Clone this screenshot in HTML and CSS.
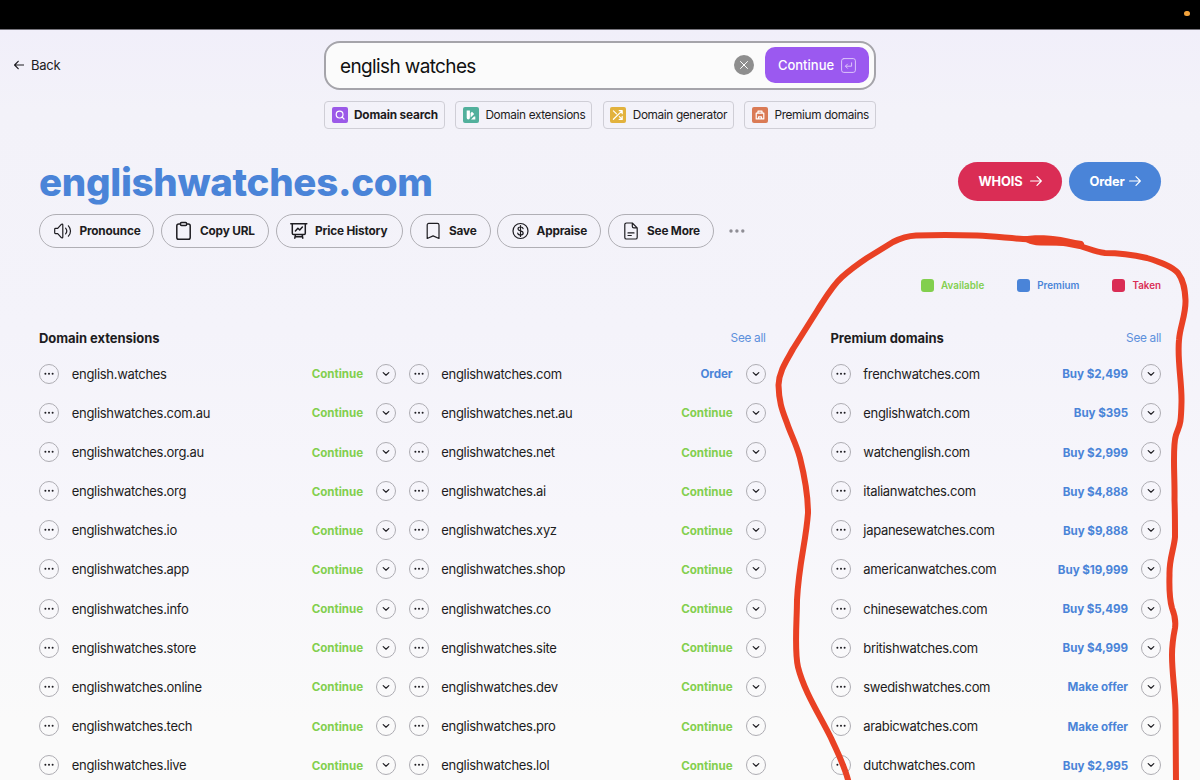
FILE: index.html
```html
<!DOCTYPE html>
<html lang="en">
<head>
	<meta charset="UTF-8">
	<title>englishwatches.com</title>
	<link rel="stylesheet" href="styles.css">
</head>
<body>
<div class="topbar"><i class="cam-dot"></i></div>

<header class="header">
	<a class="back">
		<svg width="10" height="10" viewBox="0 0 10 10"><path d="M9.7 5H.8M4.2 1.3L.6 5l3.6 3.7"/></svg>
		Back
	</a>
	<div class="search">
		<div class="search-box">
			<span class="search-text">english watches</span>
			<span class="clear"><svg width="20" height="20" viewBox="0 0 20 20"><path d="M6.5 6.5l7 7M13.5 6.5l-7 7"/></svg></span>
			<button class="go">Continue
				<svg width="15" height="15" viewBox="0 0 15 15"><rect x=".6" y=".6" width="13.8" height="13.8" rx="2.2"/><path d="M10.6 4.8v3.4H4.6M6.5 6.1L4.4 8.2l2.1 2.1"/></svg>
			</button>
		</div>
		<nav class="tabs">
			<a class="tab on"><span class="tab-icon purple"><svg width="16" height="16" viewBox="0 0 16 16"><circle cx="7.6" cy="7.6" r="3.4"/><path d="M10.2 10.2l1.8 1.8"/></svg></span>Domain search</a>
			<a class="tab"><span class="tab-icon teal"><svg width="16" height="16" viewBox="0 0 16 16"><path class="fill" d="M3.7 3.6h3.2v7.2a1.6 1.6 0 0 1-3.2 0zM7.6 6.1l1.4-1.4 2.2 2.2-3.600 3.600zM8 12.400l3-3h1.300v3z"/></svg></span>Domain extensions</a>
			<a class="tab"><span class="tab-icon yellow"><svg width="16" height="16" viewBox="0 0 16 16"><path d="M3.4 12.3L12 3.9M9.2 3.7h3v3M3.4 3.9l3.1 3M9.3 9.6l2.9 2.7M12.2 9.4v3h-3"/></svg></span>Domain generator</a>
			<a class="tab"><span class="tab-icon orange"><svg width="16" height="16" viewBox="0 0 16 16"><path d="M4.2 6.2h7.6v5.700H4.200zM6 6V4.200h4V6M6.500 11.700v-1.800h3v1.800"/></svg></span>Premium domains</a>
		</nav>
	</div>
</header>

<main class="main">
	<div class="title-row">
		<h1>englishwatches.com</h1>
		<div class="cta">
			<button class="pill red">WHOIS <svg width="12" height="12" viewBox="0 0 12 12"><path d="M.6 6h10.6M7 1.6L11.3 6 7 10.4"/></svg></button>
			<button class="pill blue">Order <svg width="12" height="12" viewBox="0 0 12 12"><path d="M.6 6h10.6M7 1.6L11.3 6 7 10.4"/></svg></button>
		</div>
	</div>

	<div class="tools">
		<button class="tool t1"><svg width="19" height="18" viewBox="0 0 19 18"><path d="M1.5 6.4h2.2l3.6-4c.7-.6 1.500-.3 1.500.6v12c0 .9-.8 1.200-1.500.6l-3.600-4H1.500c-.5 0-.8-.3-.8-.8V7.200c0-.5.3-.8.8-.8zM11.600 6.100c1.400 1.700 1.400 4.100 0 5.800M14.400 3.800c2.800 2.900 2.800 7.500 0 10.400"/></svg>Pronounce</button>
		<button class="tool t2"><svg width="18" height="20" viewBox="0 0 18 20"><path class="bold" d="M5.600 3H3.800C2.600 3 1.800 3.800 1.800 4.800v11.600c0 1 .8 1.800 1.800 1.800h9.800c1 0 1.800-.8 1.800-1.800V4.800c0-1-.8-1.800-1.800-1.800h-1.800M6.500 1.600h4.100c.6 0 1 .4 1 1v.8c0 .6-.4 1-1 1H6.500c-.6 0-1-.4-1-1v-.8c0-.6.4-1 1-1z"/></svg>Copy URL</button>
		<button class="tool t3"><svg width="18" height="18" viewBox="0 0 18 18"><path class="bold" d="M.8 1.700h16M2.300 1.700v9.600c0 .8.5 1.300 1.300 1.300h10.400c.8 0 1.300-.5 1.300-1.300V1.700M5.400 9l2.500-2.700 1.800 1.700L12.400 5M5.500 12.700l-.7 3.500M12.100 12.700l.7 3.500M5.200 14.700h7.200"/></svg>Price History</button>
		<button class="tool t4"><svg width="16" height="18" viewBox="0 0 16 18"><path d="M2.200 16.500V3c0-1 .7-1.600 1.600-1.600h8.600c1 0 1.600.7 1.600 1.600v13.500l-5.900-2.600z"/></svg>Save</button>
		<button class="tool t5"><svg width="18" height="18" viewBox="0 0 18 18"><circle cx="8.500" cy="9" r="7.500"/><path d="M11.100 6.700c-.2-1.100-1.200-1.700-2.600-1.700S6 5.700 6 6.900c0 2.700 5.200 1.400 5.200 4.100 0 1.300-1.100 2-2.700 2s-2.600-.7-2.800-1.900M8.500 3.600v10.800"/></svg>Appraise</button>
		<button class="tool t6"><svg width="16" height="18" viewBox="0 0 16 18"><path d="M9.300 1H3.400c-.9 0-1.600.7-1.600 1.600v12.800c0 .9.7 1.600 1.600 1.600h9.200c.9 0 1.600-.7 1.600-1.600V5.900zM9.300 1v3.300c0 .9.7 1.600 1.600 1.600h3.300M5 10.900h6M5 13.500h3.300"/></svg>See More</button>
		<svg class="more" width="16" height="4" viewBox="0 0 16 4"><circle cx="2" cy="2" r="1.700"/><circle cx="7.900" cy="2" r="1.700"/><circle cx="13.800" cy="2" r="1.700"/></svg>
	</div>

	<div class="legend">
		<span class="available"><i></i>Available</span>
		<span class="premium"><i></i>Premium</span>
		<span class="taken"><i></i>Taken</span>
	</div>

	<div class="lists">
		<section>
			<div class="list-head"><h2>Domain extensions</h2><a>See all</a></div>
			<div class="cols">
				<ul id="extA"></ul>
				<ul id="extB"></ul>
			</div>
		</section>
		<section>
			<div class="list-head"><h2>Premium domains</h2><a>See all</a></div>
			<ul id="premium"></ul>
		</section>
	</div>
</main>

<!-- hand drawn marker round the premium list -->
<svg class="marker" width="1200" height="780" viewBox="0 0 1200 780">
	<path class="stroke" d="M849 784C846 769 840 758 831 738C819 714 804 691 798 667C794 650 797 620 797 600C799 562 806 542 808 513C808 493 805 478 800 458C796 443 791 435 787 423C783 412 779 404 778.500 385C779 371 787 360 793 349L817 311C826 297 832 286 842 277C851 269 858 264 867 258L893 242C901 238 907 236 916 235.500C930 235 960 235 977 235.500C995 236.500 1008 238 1023 239C1045 240 1062 242 1080 246C1090 249 1096 252 1105 253C1122 253 1138 256 1147 258C1160 262 1172 266 1178 273C1184 281 1185 290 1185.500 300C1186 315 1180 326 1179 340C1177 360 1182 382 1181.500 402C1181 425 1180 424 1176 435C1172 447 1175 475 1174.500 500C1175 512 1175 526 1175 537C1174 549 1169 559 1169.500 575C1169 592 1170 601 1172 608C1174 613 1176 621 1175 628C1173 638 1172 643 1172 655C1172 674 1175 690 1175.500 710L1176 784"/>
	<path class="blob" d="M1020 237C1030 235 1045 235 1053 236C1064 237 1073 240 1082 241Q1085 243 1084 246L1040 245.500C1029 245 1023 241 1020 237z"/>
</svg>

<script src="script.js"></script>
</body>
</html>
```
FILE: styles.css
```css
* {
	box-sizing: border-box;
}

html, body {
	height: 780px;
	overflow: hidden;
}

body {
	margin: 0;
	position: relative;
	font-family: Inter, "Liberation Sans", sans-serif;
	color: #1d1c21;
	background: linear-gradient(#f1effa 30px, #f3f2f9 110px, #f4f3fa 330px, #f7f6fb 520px, #fafafa 720px);
}

button {
	font-family: inherit;
	margin: 0;
	border: 0;
	padding: 0;
	background: none;
	color: inherit;
}

svg {
	display: block;
	flex: none;
	fill: none;
	stroke: currentColor;
	stroke-width: 1.2;
	stroke-linecap: round;
	stroke-linejoin: round;
}

h1, h2, ul {
	margin: 0;
	padding: 0;
}

.topbar {
	height: 30px;
	background: #000;
	border-bottom: 1px solid #77757d;
	display: flex;
	justify-content: flex-end;
	padding: 10.5px 10.5px 0 0;
}

.cam-dot {
	width: 5.5px;
	height: 5.5px;
	border-radius: 50%;
	background: #f2a33c;
}

/* search */
.header {
	display: grid;
	grid-template-columns: 1fr 552px 1fr;
	padding-top: 11px;
}

.back {
	display: flex;
	align-items: center;
	height: 48px;
	padding-left: 14px;
	gap: 7px;
	font-size: 13px;
	letter-spacing: -.25px;
}

.search-box {
	display: flex;
	align-items: center;
	height: 49px;
	border: 2px solid #a5a4aa;
	border-radius: 16px;
	background: #fbfbfb;
	padding: 0 5px 1px 14px;
}

.search-text {
	flex: 1;
	font-size: 19px;
	letter-spacing: -.63px;
	color: #111;
	padding-top: 3px;
}

.clear {
	width: 20px;
	height: 20px;
	border-radius: 50%;
	background: #8e8e8e;
	color: #fff;
	margin-right: 11px;
}

.clear svg {
	stroke-width: 1;
}

.go {
	display: flex;
	align-items: center;
	justify-content: center;
	gap: 7px;
	width: 104px;
	height: 36px;
	border-radius: 10px;
	background: #9b59f0;
	color: #fff;
	font-size: 13px;
	font-weight: 500;
}

.go svg {
	opacity: .65;
	stroke-width: 1;
}

.tabs {
	display: flex;
	justify-content: space-between;
	margin-top: 11px;
}

.tab {
	display: flex;
	align-items: center;
	gap: 6.5px;
	height: 28px;
	padding: 0 6px 0 6.5px;
	border: 1px solid #cfced6;
	border-radius: 4px;
	font-size: 11.8px;
	letter-spacing: -.35px;
	white-space: nowrap;
}

.tab.on {
	font-weight: 700;
	letter-spacing: -.16px;
}

.tab-icon {
	width: 16px;
	height: 16px;
	border-radius: 2px;
	color: #fff;
}

.tab-icon .fill {
	fill: #fff;
	stroke: none;
}

.purple { background: #9b59e8; }
.teal { background: #52b09c; }
.yellow { background: #e2b23d; }
.orange { background: #da7a55; }

/* title */
.main {
	padding: 32.5px 39px 0;
}

.title-row {
	display: flex;
	justify-content: space-between;
	height: 39px;
}

h1 {
	font-size: 38.5px;
	line-height: 40px;
	font-weight: 800;
	letter-spacing: -.3px;
	color: #4a84d8;
}

.cta {
	display: flex;
	gap: 7px;
}

.pill {
	display: flex;
	align-items: center;
	justify-content: center;
	height: 39px;
	border-radius: 20px;
	color: #fff;
	font-size: 12.8px;
	font-weight: 700;
	letter-spacing: -.1px;
}

.pill.red {
	width: 104px;
	gap: 7px;
	background: #da2d55;
}

.pill.blue {
	width: 92px;
	gap: 4px;
	background: #4a84d8;
}

.tools {
	display: flex;
	align-items: center;
	gap: 6.5px;
	margin-top: 13px;
}

.tool {
	display: flex;
	align-items: center;
	height: 34.5px;
	padding-left: 13.5px;
	border: 1px solid #b0afb5;
	border-radius: 18px;
	font-size: 11.8px;
	font-weight: 700;
	letter-spacing: -.18px;
	white-space: nowrap;
}

.tool svg {
	margin-right: 7px;
}

.tool .bold {
	stroke-width: 1.5;
}

.t1 { width: 115px; }
.t2 { width: 108.5px; }
.t3 { width: 127.5px; }
.t4 { width: 81px; }
.t5 { width: 104px; }
.t6 { width: 106.5px; }

.t4 svg,
.t6 svg {
	margin-left: 1px;
	margin-right: 8px;
}

.more {
	margin-left: 8px;
	fill: #8e8d94;
	stroke: none;
}

.legend {
	display: flex;
	justify-content: flex-end;
	gap: 33px;
	margin-top: 31px;
	height: 13px;
	font-size: 9.8px;
	font-weight: 600;
	letter-spacing: .02px;
}

.legend span {
	display: flex;
	align-items: center;
	gap: 7px;
}

.legend i {
	width: 13px;
	height: 13px;
	border-radius: 3px;
	background: currentColor;
}

.available { color: #82cf4e; }
.premium { color: #4a84d8; }
.taken { color: #da2d55; }

/* lists */
.lists {
	display: grid;
	grid-template-columns: 726.5px 330.5px;
	gap: 65px;
	margin-top: 36px;
}

.list-head {
	display: flex;
	justify-content: space-between;
	align-items: center;
	height: 20px;
	margin-bottom: 6.2px;
}

h2 {
	font-size: 13px;
	font-weight: 700;
	letter-spacing: -.05px;
}

.list-head a {
	font-size: 11.8px;
	letter-spacing: -.3px;
	color: #5d90dc;
}

.cols {
	display: grid;
	grid-template-columns: 357px 357px;
	gap: 12.5px;
}

.row {
	display: flex;
	align-items: center;
	height: 39.15px;
	list-style: none;
}

.round {
	width: 20px;
	height: 20px;
	border: 1px solid #aeadb3;
	border-radius: 50%;
	flex: none;
}

.round svg {
	margin: -1px;
}

.dots {
	fill: #1d1c21;
	stroke: none;
}

.name {
	flex: 1;
	margin-left: 12.8px;
	font-size: 13px;
	letter-spacing: -.31px;
}

.action {
	margin-right: 13px;
	font-size: 11.6px;
	font-weight: 700;
	letter-spacing: -.05px;
	position: relative;
	top: .5px;
}

/* marker */
.marker {
	position: absolute;
	left: 0;
	top: 0;
	pointer-events: none;
}

.marker .stroke {
	stroke: #e94124;
	stroke-width: 6;
}

.marker .blob {
	fill: #e94124;
	stroke: none;
}
```
FILE: script.js
```js
var tlds = {
    extA: ['com.au', 'org.au', 'org', 'io', 'app', 'info', 'store', 'online', 'tech', 'live'],
    extB: ['com', 'net.au', 'net', 'ai', 'xyz', 'shop', 'co', 'site', 'dev', 'pro', 'lol']
};

var premium = [
    ['frenchwatches.com', 'Buy $2,499'],
    ['englishwatch.com', 'Buy $395'],
    ['watchenglish.com', 'Buy $2,999'],
    ['italianwatches.com', 'Buy $4,888'],
    ['japanesewatches.com', 'Buy $9,888'],
    ['americanwatches.com', 'Buy $19,999'],
    ['chinesewatches.com', 'Buy $5,499'],
    ['britishwatches.com', 'Buy $4,999'],
    ['swedishwatches.com', 'Make offer'],
    ['arabicwatches.com', 'Make offer'],
    ['dutchwatches.com', 'Buy $2,995']
];

var dots = '<svg class="dots" width="20" height="20" viewBox="0 0 20 20"><circle cx="6.4" cy="9.8" r="1"/><circle cx="10" cy="9.8" r="1"/><circle cx="13.6" cy="9.8" r="1"/></svg>';
var chevron = '<svg width="20" height="20" viewBox="0 0 20 20"><path d="M7.2 8.6l2.8 2.6 2.8-2.6"/></svg>';

function addRow(id, name, action, type) {
    document.getElementById(id).insertAdjacentHTML('beforeend',
        '<li class="row"><span class="round">' + dots + '</span>' +
        '<span class="name">' + name + '</span>' +
        '<span class="action ' + type + '">' + action + '</span>' +
        '<span class="round">' + chevron + '</span></li>');
}

addRow('extA', 'english.watches', 'Continue', 'available');
tlds.extA.forEach(function (tld) {
    addRow('extA', 'englishwatches.' + tld, 'Continue', 'available');
});

//the .com is a premium domain, so it is ordered instead
tlds.extB.forEach(function (tld) {
    var order = tld === 'com';
    addRow('extB', 'englishwatches.' + tld, order ? 'Order' : 'Continue', order ? 'premium' : 'available');
});

premium.forEach(function (item) {
    addRow('premium', item[0], item[1], 'premium');
});
```
